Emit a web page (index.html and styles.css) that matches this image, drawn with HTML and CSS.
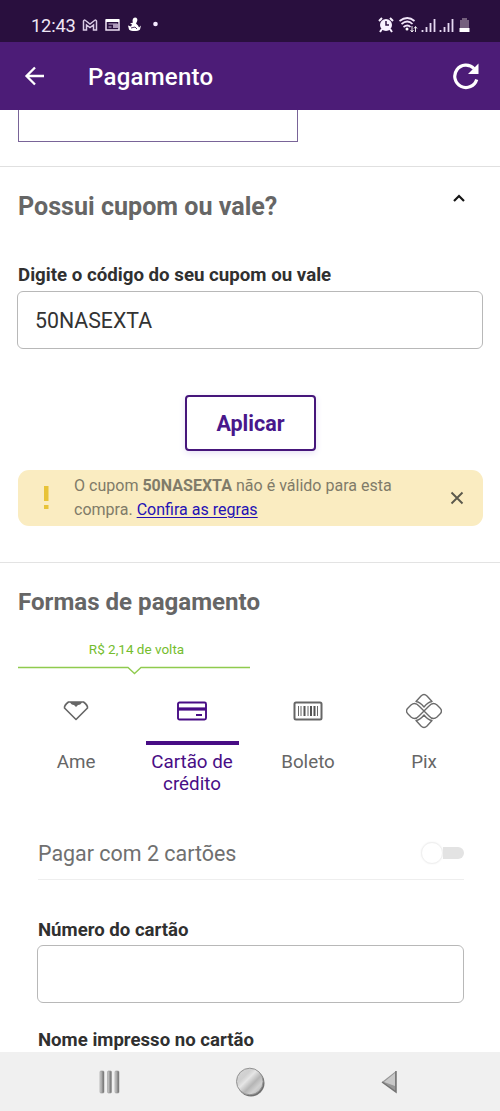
FILE: index.html
```html
<!DOCTYPE html>
<html lang="pt-BR">
<head>
<meta charset="utf-8">
<title>Pagamento</title>
<link rel="stylesheet" href="styles.css">
</head>
<body>
<div class="status">
  <span class="clock">12:43</span>
  <svg class="notif" width="80" height="18" viewBox="0 0 80 18">
    <path d="M1.500 14V5Q2 3.500 3.500 4.500L8 8l4.500-3.500Q14 3.500 14.500 5v9h-3V9L8 11.500 4.500 9v5z" fill="none" stroke="#dacbe6" stroke-width="1.500"/>
    <path d="M24 4h13v10H24z" fill="none" stroke="#eee2f5" stroke-width="1.500"/><path d="M24 4.500h13" stroke="#fff" stroke-width="3"/><path d="M26.500 8h9M26.500 11h3" stroke="#cdbbd8"/><path d="M31 8h5v4h-5z" fill="#ae9abb"/>
    <path d="M53 1.500c2 0 3 2 2 4l-1 2 2 2 1 2 2-2-1 4c-2 2-9 2-11 0l-1-4 3 1 1-2-2-1 3-1c-1-2 0-5 2-5z" fill="#fff"/><path d="M49 12l4-1 2 2" stroke="#513563" fill="none"/>
    <circle cx="73.500" cy="8" r="2.300" fill="#f4eaff"/>
  </svg>
  <svg class="signals" width="94" height="20" viewBox="0 0 94 20">
    <circle cx="9" cy="10" r="6" fill="#f8f0ff"/><path d="M2 6l3-3M13 3l3 3M5 14l-2 3M13 14l2 3" stroke="#f8f0ff" stroke-width="2"/><path d="M9 6v4h3" fill="none" stroke="#2d1043" stroke-width="1.500"/>
    <path d="M22.500 6q8-6 15 0M24.500 9q6-5 11 0M26.500 12q4-3 7 0" fill="none" stroke="#f1e5fa" stroke-width="1.700"/><circle cx="30" cy="14" r="1.500" fill="#fff"/><path d="M35 17v-6m-1.500 4 1.500 2 1.500-2M38.500 17v-5m-1.500 1.500 1.500-2 1.500 2" fill="none" stroke="#fff" stroke-width=".9"/>
    <path d="M45.500 17v-2M49.500 17v-5M53.500 17V8M57.500 17V4M63.500 17v-2M67.500 17v-5M71.500 17V8M75.500 17V4" stroke="#e7d9f2" stroke-width="1.800"/>
    <path d="M85 3h5v2h2v9H83V5h2z" fill="#75617e"/><path d="M82.500 13h10v4h-10z" fill="#fff"/>
  </svg>
</div>
<header class="appbar">
  <svg class="back" width="22" height="22" viewBox="0 0 22 22"><path d="M21 11H3M12 2.500 3.500 11 12 19.500" fill="none" stroke="#fff" stroke-width="2.300"/></svg>
  <h1>Pagamento</h1>
  <svg class="reload" width="28" height="28" viewBox="0 0 28 28"><path d="M22 6.500A11.200 11.200 0 1 0 24.700 17.500" fill="none" stroke="#fff" stroke-width="3.200"/><path d="M26.500 1.500V12H16z" fill="#fff"/></svg>
</header>
<main>
  <section class="previous"><div class="cut-card"></div></section>
  <section class="coupon">
    <div class="section-head"><h2>Possui cupom ou vale?</h2><svg width="14" height="10" viewBox="0 0 14 10"><path d="M2 8l5-5 5 5" fill="none" stroke="#161616" stroke-width="2.200"/></svg></div>
    <label class="coupon-label" for="coupon">Digite o código do seu cupom ou vale</label>
    <input id="coupon" class="field" value="50NASEXTA">
    <button class="apply">Aplicar</button>
    <div class="alert">
      <svg class="warning" width="8" height="26" viewBox="0 0 8 26"><path d="M2 1h4.500v15H2zM2 20h4.500v4H2z" fill="#e8c338"/></svg>
      <p>O cupom <b>50NASEXTA</b> não é válido para esta<br>compra. <a href="#">Confira as regras</a></p>
      <svg class="close" width="14" height="14" viewBox="0 0 14 14"><path d="M1.500 1.500l11 11m0-11-11 11" stroke="#5b594c" stroke-width="1.900"/></svg>
    </div>
  </section>
  <section class="payment">
    <h2 class="methods-title">Formas de pagamento</h2>
    <div class="cashback"><span>R$ 2,14 de volta</span><svg width="232" height="10" viewBox="0 0 232 10"><path d="M0 1.500h110l6.500 6 6.500-6h109" fill="none" stroke="#8fcb4e" stroke-width="1.300"/></svg></div>
    <nav class="methods">
      <div class="method">
        <div class="icon"><svg width="26" height="22" viewBox="0 0 26 22"><path d="M5.500 2h15q4.500 3.500 4 6L13 19.500 1.500 8Q1 5.500 5.500 2z" fill="none" stroke="#666" stroke-width="1.600" stroke-linejoin="round"/><path d="M7 2q1 3 4 3l2 2 2-2q3 0 4-3z" fill="#666"/></svg></div><span>Ame</span>
      </div>
      <div class="method selected">
        <div class="icon"><svg width="30" height="20" viewBox="0 0 30 20"><rect x="1" y="1.500" width="28" height="17" rx="1.500" fill="none" stroke="#480d85" stroke-width="1.900"/><path d="M1 8h28" stroke="#480d85" stroke-width="3.200"/><path d="M19 14h6" stroke="#480d85" stroke-width="2"/></svg></div><span>Cartão de<br>crédito</span>
      </div>
      <div class="method">
        <div class="icon"><svg width="30" height="20" viewBox="0 0 30 20"><rect x="1.500" y="1.500" width="27" height="17" rx="1.500" fill="none" stroke="#666" stroke-width="2"/><path d="M5.500 5v10M8 5v10M15 5v10M24.500 5v10" stroke="#686868"/><path d="M11.500 5v10M18 5v10M21.500 5v10" stroke="#555" stroke-width="2"/></svg></div><span>Boleto</span>
      </div>
      <div class="method">
        <div class="icon"><svg width="36" height="36" viewBox="0 0 36 36"><g fill="none" stroke="#6b6b6b" stroke-width="1.400" stroke-linejoin="round"><path d="M10 8.500 15 3q3-3 6 0l5 5.500Q22 9 18 14q-4-5-8-5.500z"/><path d="M10 27.500 15 33q3 3 6 0l5-5.500q-4-.5-8-5.500-4 5-8 5.500z"/><path d="M18 18 13 13Q9 8.500 5 12l-3 3q-3 3 0 6l3 3q4 3.500 8-1zM18 18l5-5q4-4.500 8-1l3 3q3 3 0 6l-3 3q-4 3.500-8-1z"/></g></svg></div><span>Pix</span>
      </div>
    </nav>
    <div class="two-cards"><span>Pagar com 2 cartões</span><div class="switch"><i></i></div></div>
    <label class="number-label" for="number">Número do cartão</label>
    <input class="field card-field" id="number">
    <div class="name-label">Nome impresso no cartão</div>
  </section>
</main>
<footer>
  <svg width="24" height="28" viewBox="0 0 24 28"><defs><linearGradient id="bar"><stop stop-color="#d7d7d7"/><stop offset="1" stop-color="#656565"/></linearGradient></defs><g fill="url(#bar)" stroke="#979797" stroke-width=".6"><rect x="2" y="3" width="4" height="22" rx="1"/><rect x="9.500" y="3" width="4" height="22" rx="1"/><rect x="17" y="3" width="4" height="22" rx="1"/></g></svg>
  <svg width="32" height="32" viewBox="0 0 32 32"><defs><linearGradient id="metal" x2="1" y2="1"><stop stop-color="#d8d8d8"/><stop offset=".3" stop-color="#d0d0d0"/><stop offset=".42" stop-color="#e5e5e5"/><stop offset=".6" stop-color="#b5b5b5"/><stop offset=".75" stop-color="#d1d1d1"/><stop offset="1" stop-color="#aaa"/></linearGradient></defs><circle cx="16" cy="17" r="13.500" fill="#707070"/><circle cx="14.800" cy="15.500" r="13.300" fill="url(#metal)" stroke="#929292"/></svg>
  <svg width="20" height="28" viewBox="0 0 20 28"><path d="M16 3v21L2 14z" fill="#969696"/><path d="M15 5v13L4 14z" fill="#c8c8c8"/><path d="M16 3v21L2 14" fill="none" stroke="#737373" stroke-width="1.500"/></svg>
</footer>
</body>
</html>
```
FILE: styles.css
```css
* { box-sizing: border-box; }
body { margin: 0; width: 500px; height: 1111px; overflow: hidden; display: flex; flex-direction: column; font-family: Roboto, sans-serif; color: #303030; background: #fff; }
h1, h2, p { margin: 0; }
svg { display: block; flex-shrink: 0; }
.status { height: 42px; flex-shrink: 0; background: #290f3e; color: #eee6f4; display: flex; align-items: center; padding: 8px 29px 0 31px; }
.clock { width: 45px; font-size: 18.300px; letter-spacing: -.2px; }
.notif { margin-left: 6px; }
.signals { margin-left: auto; }
.appbar { height: 68px; flex-shrink: 0; display: flex; align-items: center; background: #4c1c77; color: #fff; padding: 0 20px 0 23px; }
h1 { font-size: 24px; font-weight: 500; letter-spacing: .25px; line-height: 30px; margin-left: 43px; padding-top: 2px; }
.reload { margin-left: auto; }
main { height: 942px; flex-shrink: 0; overflow: hidden; }
.previous { height: 57px; padding-left: 18px; border-bottom: 1px solid #e0e0e0; }
.cut-card { width: 280px; height: 32px; border: solid #796498; border-width: 0 1px 1px; }
.coupon { height: 396px; padding: 22px 17px 0 18px; border-bottom: 1px solid #e3e3e3; }
.section-head { height: 34px; display: flex; justify-content: space-between; padding-right: 17px; }
.section-head h2 { padding-top: 1px; }
.section-head svg { margin-top: 4px; }
h2 { color: #666; font-size: 25.100px; line-height: 34px; font-weight: 700; white-space: nowrap; }
.methods-title { font-size: 24.100px; }
label, .name-label { color: #303030; font-size: 18.600px; line-height: 24px; font-weight: 700; white-space: nowrap; }
.coupon-label { display: block; margin-top: 40px; height: 28px; font-size: 18.700px; }
.field { display: block; width: 466px; height: 58px; margin: 0 0 0 -1px; border: 1px solid #b8b8b8; border-radius: 6px; padding: 0 17px; font: 21.300px Roboto, sans-serif; color: #333; background: white; outline: none; }
.apply { display: block; width: 131px; height: 56px; margin: 46px auto 0; padding: 0; border: 2px solid #46167b; border-radius: 4px; background: #fff; color: #48178b; font: 700 21.500px Roboto, sans-serif; box-shadow: 0 2px 7px #e6e0f5; }
.alert { width: 465px; height: 56px; border-radius: 11px; margin-top: 19px; background: #faecc1; display: flex; align-items: center; padding: 0 19px 0 24px; }
.alert p { margin-left: 24px; font-size: 16.050px; line-height: 24px; color: #807b69; white-space: nowrap; }
.alert b { font-weight: 700; }
.alert a { color: #2412b5; text-decoration-thickness: 1px; text-underline-offset: 2px; }
.close { margin-left: auto; }
.payment { padding: 22px 17px 0 18px; }
.cashback { width: 232px; text-align: center; padding-top: 20px; color: #75bd2e; font-size: 13.500px; line-height: 20px; }
.cashback span { display: block; padding-left: 5px; }
.cashback svg { margin-top: 7px; }
.methods { display: grid; grid-template-columns: repeat(4, 116px); height: 134px; }
.method { color: #666; font-size: 18.800px; line-height: 22px; text-align: center; }
.icon { width: 93px; height: 69px; margin: 0 auto 6px; display: flex; align-items: center; justify-content: center; padding-top: 4px; border-bottom: 4px solid transparent; }
.selected { color: #480d85; }
.selected .icon { border-color: #480d85; }
.two-cards { width: 426px; height: 70px; margin-left: 20px; border-bottom: 1px solid #eee; display: flex; align-items: center; justify-content: space-between; color: #707070; font-size: 21.450px; padding-top: 17px; }
.switch { width: 43px; height: 22px; display: flex; align-items: center; }
.switch::after { content: ""; width: 22px; height: 12px; background: #e3e3e3; border-radius: 0 6px 6px 0; }
.switch i { width: 22px; height: 22px; border: 1px solid #f0f0f0; border-radius: 50%; background: #fff; box-shadow: 0 0 2px #f0f0f0; flex-shrink: 0; }
.number-label { display: block; margin: 38px 0 3px 20px; }
.card-field { width: 427px; margin-left: 19px; }
.name-label { margin: 26px 0 0 20px; line-height: 22px; }
footer { height: 59px; flex-shrink: 0; background: #f0f0f0; display: flex; align-items: center; justify-content: space-between; padding: 0 100px 0 98px; }
```
